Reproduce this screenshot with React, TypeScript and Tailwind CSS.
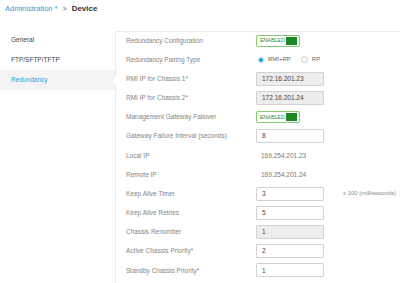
const font = { fontFamily: '"Liberation Sans", Arial, sans-serif' };

type Row = {
  label: string;
  kind: "toggle" | "radio" | "input" | "text";
  value?: string;
  disabled?: boolean;
  suffix?: string;
};

const rows: Row[] = [
  { label: "Redundancy Configuration", kind: "toggle" },
  { label: "Redundancy Pairing Type", kind: "radio" },
  { label: "RMI IP for Chassis 1*", kind: "input", value: "172.16.201.23", disabled: true },
  { label: "RMI IP for Chassis 2*", kind: "input", value: "172.16.201.24", disabled: true },
  { label: "Management Gateway Failover", kind: "toggle" },
  { label: "Gateway Failure Interval (seconds)", kind: "input", value: "8" },
  { label: "Local IP", kind: "text", value: "169.254.201.23" },
  { label: "Remote IP", kind: "text", value: "169.254.201.24" },
  { label: "Keep Alive Timer", kind: "input", value: "3", suffix: "x 100 (milliseconds)" },
  { label: "Keep Alive Retries", kind: "input", value: "5" },
  { label: "Chassis Renumber", kind: "input", value: "1", disabled: true },
  { label: "Active Chassis Priority*", kind: "input", value: "2" },
  { label: "Standby Chassis Priority*", kind: "input", value: "1" },
];

function Toggle() {
  return (
    <div className="w-[44px] h-[12px] rounded-[2px] border border-[#86c874] flex items-center justify-between pl-[3px] pr-[2px]">
      <span className="text-[5.5px] text-[#3a8d2c] tracking-tight">ENABLED</span>
      <span className="w-[11px] h-[8px] bg-[#1c8a24]" />
    </div>
  );
}

function Control({ row }: { row: Row }) {
  if (row.kind === "toggle") return <Toggle />;
  if (row.kind === "radio")
    return (
      <div className="flex items-center text-[6px] text-[#666]">
        <span className="w-[6px] h-[6px] rounded-full border border-[#cfe6f5] bg-[#1e9ad6] ml-[2px]" />
        <span className="ml-[4px]">RMI+RP</span>
        <span className="w-[7px] h-[7px] rounded-full border border-[#cccccc] bg-white ml-[10px]" />
        <span className="ml-[4px]">RP</span>
      </div>
    );
  if (row.kind === "text")
    return <span className="pl-[5px] text-[6.5px] text-[#777]">{row.value}</span>;
  return (
    <div className="flex items-center">
      <div
        className={`w-[68px] h-[14px] rounded-[1px] border border-[#d2d2d2] flex items-center pl-[5px] text-[6.5px] text-[#444] ${
          row.disabled ? "bg-[#ededed]" : "bg-white"
        }`}
      >
        {row.value}
      </div>
      {row.suffix && <span className="ml-[19px] text-[6px] text-[#888]">{row.suffix}</span>}
    </div>
  );
}

export default function App() {
  return (
    <div className="w-[400px] h-[283px] bg-white overflow-hidden" style={font}>
      <div className="h-[31px] flex items-start pt-[4px] pl-[5px]">
        <div className="flex items-center h-[10px]">
          <span className="text-[7.5px] text-[#2a9fd8]">Administration *</span>
          <span className="ml-[5px] text-[7px] text-[#555]">&gt;</span>
          <span className="ml-[5px] text-[8px] font-bold text-[#333]">Device</span>
        </div>
      </div>
      <div className="flex">
        <div className="w-[115px] -mt-[1px] text-[6.5px] text-[#444]">
          <div className="h-[20px] flex items-center pl-[11px]">General</div>
          <div className="h-[20px] flex items-center pl-[11px]">FTP/SFTP/TFTP</div>
          <div className="h-[20px] flex items-center pl-[11px] bg-[#f4f4f4] text-[#2a9fd8]">Redundancy</div>
        </div>
        <div className="relative flex-1 border-t border-l border-[#ececec] h-[252px]">
          <div className="absolute -left-[4px] top-[45px] w-[7px] h-[7px] rotate-45 bg-white border-l border-b border-[#ececec]" />
          <div className="grid auto-rows-[19.17px] pl-[10px] -mt-[1px]">
            {rows.map((row) => (
              <div key={row.label} className="flex items-center">
                <span className="w-[130px] text-[6.5px] text-[#858585]">{row.label}</span>
                <Control row={row} />
              </div>
            ))}
          </div>
        </div>
      </div>
    </div>
  );
}
